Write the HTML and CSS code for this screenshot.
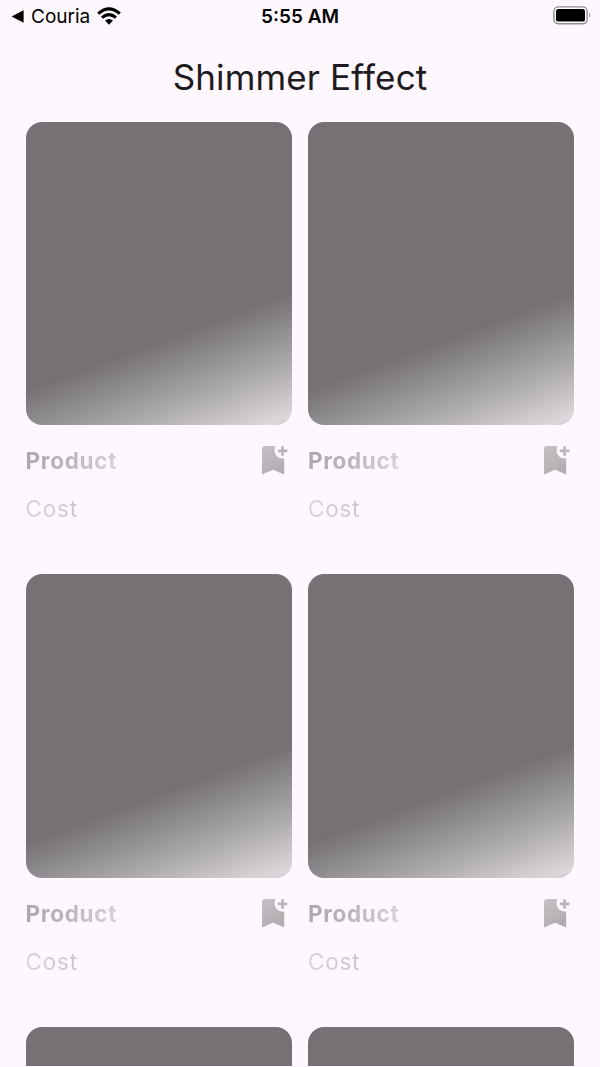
FILE: index.html
```html
<!DOCTYPE html>
<html lang="en">
<head>
<meta charset="utf-8">
<title>Shimmer Effect</title>
<link rel="stylesheet" href="styles.css">
</head>
<body>
<svg class="defs" width="0" height="0" aria-hidden="true">
  <defs>
    <linearGradient id="shimmer" x1="0" y1="0" x2="0.5" y2="1">
      <stop offset="0" stop-color="#c5c1c5"/>
      <stop offset="1" stop-color="#b1adb1"/>
    </linearGradient>
    <symbol id="bookmark" viewBox="0 0 27 30">
      <path fill="url(#shimmer)" d="M4 1H14.5C12.2 5.6 14 12.6 20.5 13.4Q22.2 13.8 23.2 13.4V29.4L12 24.8L1 29.4V4Q1 1 4 1Z"/>
      <path fill="#b9b5b9" d="M20.2 1.2H22.9V4.6H26.4V7.3H22.9V10.8H20.2V7.3H16.8V4.6H20.2Z"/>
    </symbol>
  </defs>
</svg>
<div class="screen">
  <header class="status">
    <div class="back">
      <svg width="13" height="13" viewBox="0 0 13 13"><path d="M0.6 6.5L12.6 0.2V12.8Z"/></svg>
      <span class="app">Couria</span>
      <svg class="wifi" width="24" height="18" viewBox="0 0 24 18">
        <g fill="none" stroke="#000" stroke-width="3">
          <path d="M1.2 6.6Q12 -2.9 22.8 6.6"/>
          <path d="M5 10.7Q12 4.6 19 10.7"/>
        </g>
        <path d="M8 13.6Q12 10.5 16 13.6L12 17.7Z"/>
      </svg>
    </div>
    <div class="time">5:55 AM</div>
    <svg class="battery" width="38" height="19" viewBox="0 0 38 19">
      <rect x="0.9" y="0.9" width="33.2" height="16.8" rx="4.4" fill="#fff" stroke="#8e8b8e" stroke-width="1.4"/>
      <rect x="3" y="3" width="29" height="12.6" rx="2.2"/>
      <path d="M36.4 6.5Q38.4 9.2 36.4 12Z" fill="#8e8b8e"/>
    </svg>
  </header>
  <h1 class="title">Shimmer Effect</h1>
  <main class="grid">
    <article class="card">
      <div class="photo"></div>
      <div class="row"><span class="name">Product</span><svg class="mark"><use href="#bookmark"/></svg></div>
      <div class="cost">Cost</div>
    </article>
    <article class="card">
      <div class="photo"></div>
      <div class="row"><span class="name">Product</span><svg class="mark"><use href="#bookmark"/></svg></div>
      <div class="cost">Cost</div>
    </article>
    <article class="card">
      <div class="photo"></div>
      <div class="row"><span class="name">Product</span><svg class="mark"><use href="#bookmark"/></svg></div>
      <div class="cost">Cost</div>
    </article>
    <article class="card">
      <div class="photo"></div>
      <div class="row"><span class="name">Product</span><svg class="mark"><use href="#bookmark"/></svg></div>
      <div class="cost">Cost</div>
    </article>
    <article class="card"><div class="photo"></div></article>
    <article class="card"><div class="photo"></div></article>
  </main>
</div>
</body>
</html>
```

FILE: styles.css
```css
* { box-sizing: border-box; }

body {
  margin: 0;
  background: #fef8fe;
  font-family: Inter, "Liberation Sans", sans-serif;
}

.defs { display: block; }

.screen {
  width: 600px;
  height: 1066px;
  overflow: hidden;
}

.status {
  display: grid;
  grid-template-columns: 1fr auto 1fr;
  align-items: center;
  height: 33px;
  padding: 0 9px 0 11px;
}

.back { display: flex; align-items: center; }

.app {
  margin-left: 7px;
  font-size: 19px;
  line-height: 32px;
}

.wifi { margin: 0 0 1px 7px; }

.time {
  margin-left: -2px;
  font-size: 19px;
  font-weight: 600;
  line-height: 32px;
}

.battery { justify-self: end; margin-bottom: 2px; }

.title {
  margin: 0;
  height: 88.6px;
  color: #1d1a20;
  font-size: 35px;
  font-weight: 400;
  line-height: 89px;
  letter-spacing: 0.14px;
  text-align: center;
}

.grid {
  display: grid;
  grid-template-columns: 266px 266px;
  grid-auto-rows: 452.8px;
  column-gap: 16.3px;
  padding-left: 25.6px;
}

.photo {
  height: 303.9px;
  border-radius: 16px;
  background: linear-gradient(159.6deg, #757174 67%, #8b888b 74%, #aeabae 85%, #d0ccd0 94.5%, #dbd7db 97.8%, #d2ced2 98.6%);
}

.row {
  display: flex;
  justify-content: space-between;
  height: 52px;
  padding: 20px 4px 0 0;
}

.name,
.cost {
  width: max-content;
  color: transparent;
  background-clip: text;
  -webkit-background-clip: text;
}

.name {
  height: 32px;
  font-size: 22.5px;
  font-weight: 700;
  line-height: 31px;
  letter-spacing: 0.7px;
  background-image: linear-gradient(100deg, #aaa6aa, #bbb7bb 50%, #d8d3d8);
}

.mark { width: 27px; height: 30px; }

.cost {
  margin-top: 16px;
  font-size: 22.5px;
  line-height: 32px;
  letter-spacing: 0.8px;
  background-image: linear-gradient(100deg, #d8d4d8, #c9c5c9);
}
```
